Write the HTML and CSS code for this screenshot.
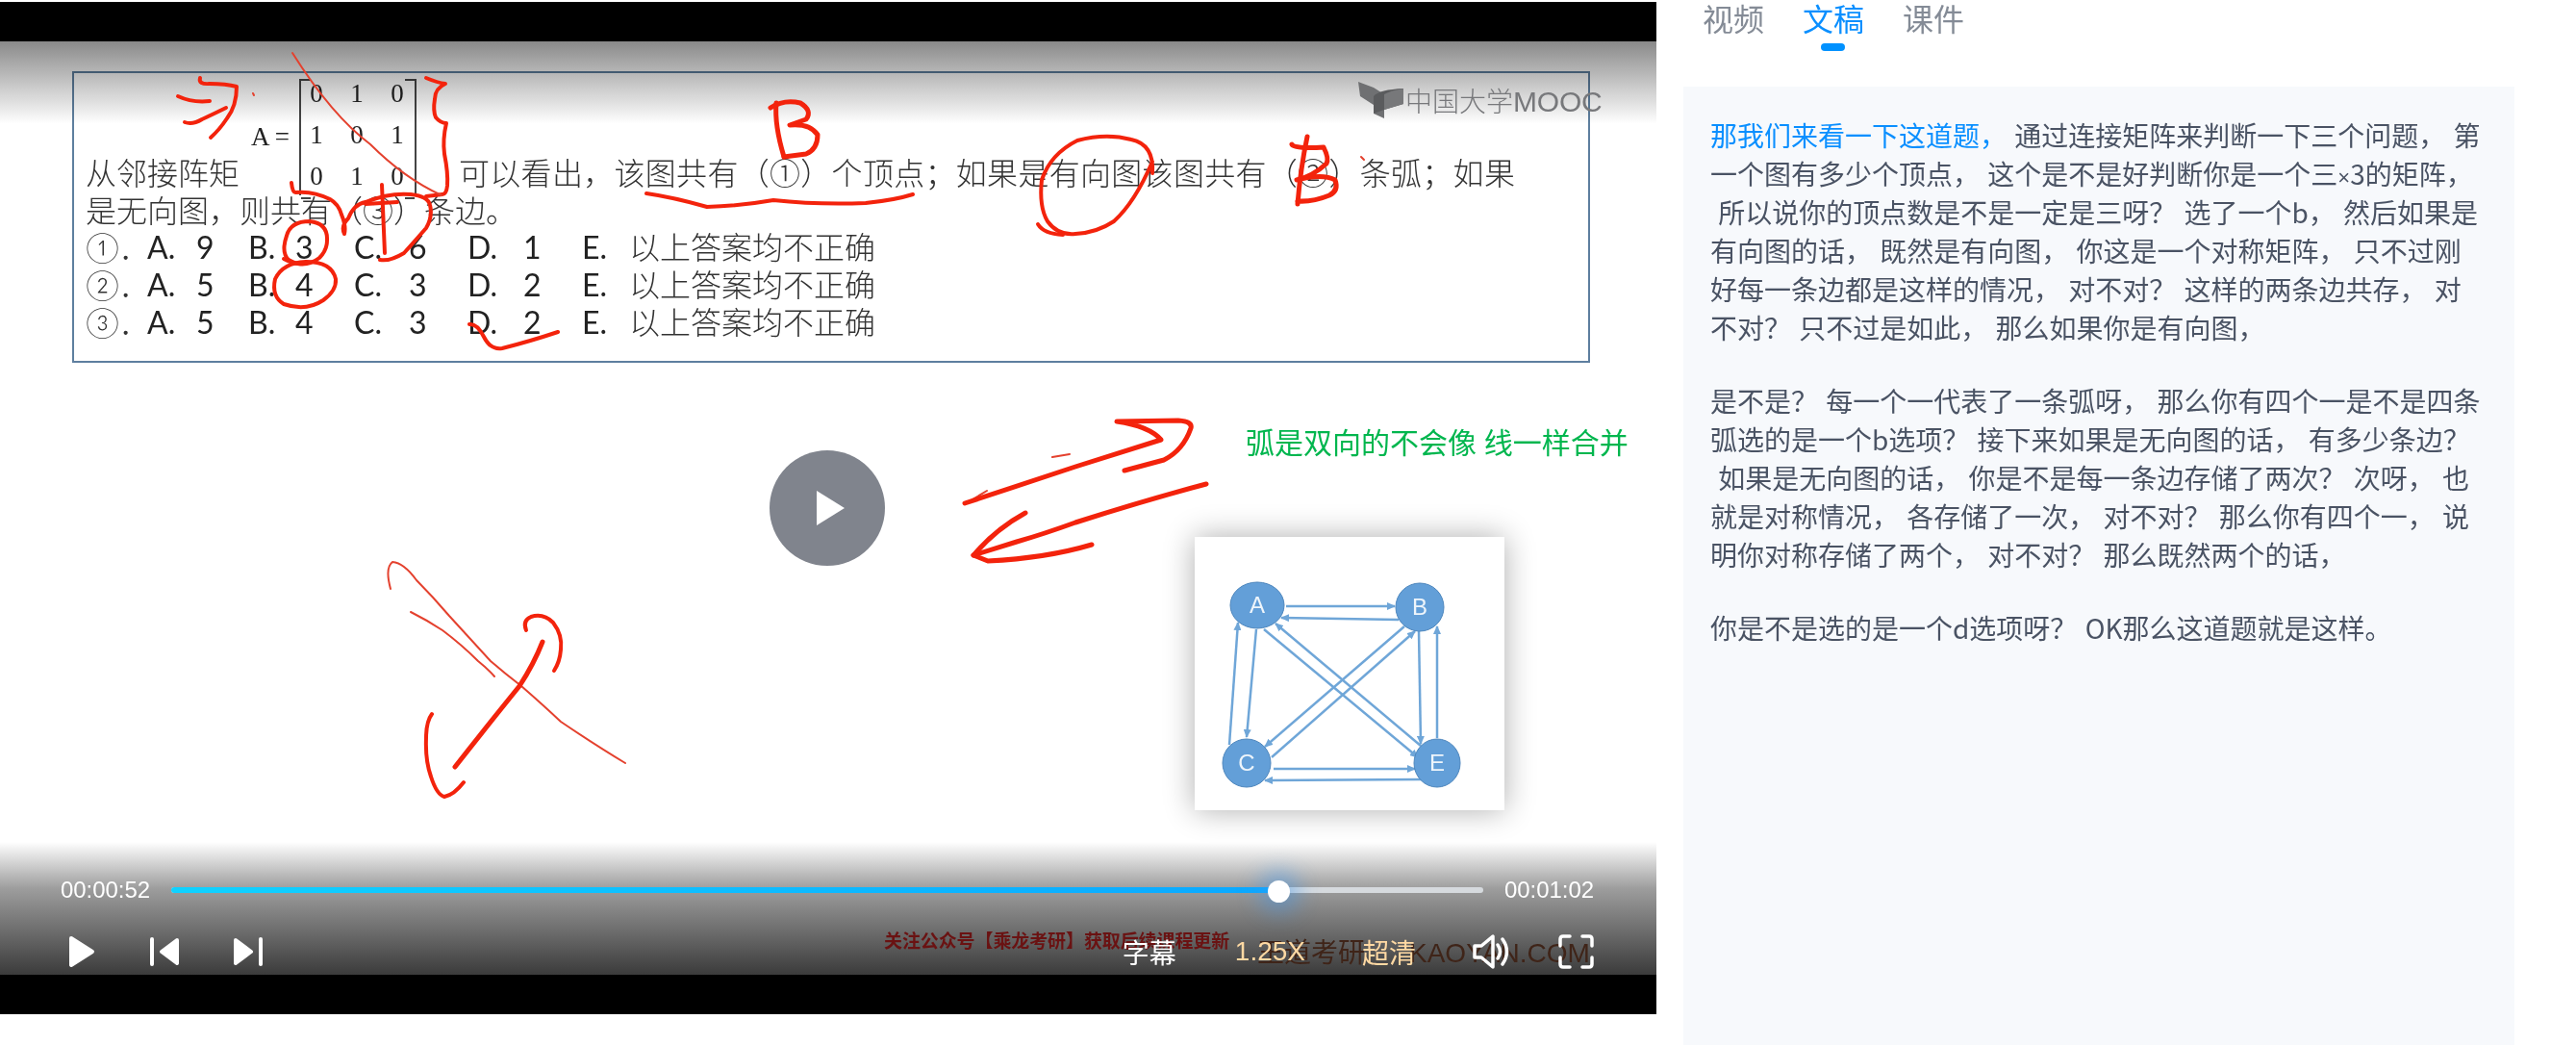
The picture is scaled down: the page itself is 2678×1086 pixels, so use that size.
FILE: index.html
```html
<!DOCTYPE html>
<html lang="zh-CN">
<head>
<meta charset="utf-8">
<title>文稿</title>
<link rel="stylesheet" href="styles.css">
</head>
<body>
<div class="page">
  <section class="player">
    <div class="letterbox"></div>
    <div class="stage">
      <div class="question">
        <p class="q-line q-first"><span>从邻接阵矩</span><span>可以看出，该图共有（①）个顶点；如果是有向图该图共有（②）条弧；如果</span></p>
        <p class="q-line">是无向图，则共有（③）条边。</p>
        <div class="opts">
          <span>①．</span><span>A.</span><span>9</span><span>B.</span><span>3</span><span>C.</span><span>6</span><span>D.</span><span>1</span><span>E.</span><span>以上答案均不正确</span>
          <span>②．</span><span>A.</span><span>5</span><span>B.</span><span>4</span><span>C.</span><span>3</span><span>D.</span><span>2</span><span>E.</span><span>以上答案均不正确</span>
          <span>③．</span><span>A.</span><span>5</span><span>B.</span><span>4</span><span>C.</span><span>3</span><span>D.</span><span>2</span><span>E.</span><span>以上答案均不正确</span>
        </div>
        <div class="matrix-wrap">
          <span class="matrix-name">A =</span>
          <div class="matrix">
            <span>0</span><span>1</span><span>0</span>
            <span>1</span><span>0</span><span>1</span>
            <span>0</span><span>1</span><span>0</span>
          </div>
        </div>
      </div>

      <div class="top-shade"></div>

      <div class="mooc">
        <svg class="mooc-logo" width="47" height="38" viewBox="0 0 47 38">
          <path d="M0 0 L16 6 L27 13 L27 38 L16 33 L16 24 L2 15 Z" fill="#6f7072"/>
          <path d="M16 15 Q22 8 47 7 L47 23 L27 29 L16 33 Z" fill="#5a5b5d"/>
          <path d="M27 13 Q34 9 47 7 L47 23 L27 29 Z" fill="#77787a"/>
        </svg>
        <span class="mooc-text">中国大学<span class="mooc-en">MOOC</span></span>
      </div>

      <p class="note">弧是双向的不会像 线一样合并</p>

      <div class="graph-card">
        <svg width="322" height="284" viewBox="0 0 322 284">
          <defs>
            <marker id="ah" markerWidth="9" markerHeight="8" refX="8" refY="4" orient="auto" markerUnits="userSpaceOnUse">
              <path d="M0 0 L9 4 L0 8 Z" fill="#6fa6d8"/>
            </marker>
          </defs>
          <g class="edges">
            <line x1="95" y1="72" x2="208" y2="72" marker-end="url(#ah)"/>
            <line x1="212" y1="86" x2="90" y2="84" marker-end="url(#ah)"/>
            <line x1="64" y1="96" x2="54" y2="208" marker-end="url(#ah)"/>
            <line x1="36" y1="216" x2="45" y2="89" marker-end="url(#ah)"/>
            <line x1="72" y1="96" x2="232" y2="229" marker-end="url(#ah)"/>
            <line x1="235" y1="217" x2="84" y2="90" marker-end="url(#ah)"/>
            <line x1="218" y1="93" x2="73" y2="218" marker-end="url(#ah)"/>
            <line x1="80" y1="229" x2="229" y2="98" marker-end="url(#ah)"/>
            <line x1="233" y1="98" x2="235" y2="215" marker-end="url(#ah)"/>
            <line x1="252" y1="209" x2="252" y2="93" marker-end="url(#ah)"/>
            <line x1="82" y1="241" x2="229" y2="241" marker-end="url(#ah)"/>
            <line x1="235" y1="252" x2="73" y2="253" marker-end="url(#ah)"/>
          </g>
          <g class="nodes">
            <ellipse cx="65" cy="71" rx="28" ry="24"/>
            <ellipse cx="234" cy="73" rx="25" ry="25"/>
            <ellipse cx="54" cy="235" rx="25" ry="25"/>
            <ellipse cx="252" cy="235" rx="24" ry="25"/>
          </g>
          <g class="labels">
            <text x="65" y="79">A</text>
            <text x="234" y="81">B</text>
            <text x="54" y="243">C</text>
            <text x="252" y="243">E</text>
          </g>
        </svg>
      </div>

      <div class="big-play">
        <svg width="30" height="36" viewBox="0 0 30 36"><path d="M0 0 L29 18 L0 36 Z" fill="#fff"/></svg>
      </div>

      <svg class="ink" width="1722" height="970" viewBox="0 43 1722 970">
        <g class="ink-md">
          <path d="M208 81 Q206 88 218 87 Q235 87 246 90 Q246 110 236 123 Q228 135 219 143"/>
          <path d="M185 100 Q200 107 218 105"/>
          <path d="M192 127 Q200 130 210 124 Q225 117 235 112"/>
          <path d="M443 81 Q455 86 463 87 Q452 92 452 103 Q450 115 453 122 Q458 128 464 128 Q460 145 462 160 Q466 180 465 193 Q464 202 460 202 L443 204"/>
          <path d="M303 190 Q304 200 307 200 Q325 198 343 207 Q352 212 355 223 Q360 235 358 243 Q354 235 362 227 Q368 212 380 210 Q405 200 427 202 Q445 204 447 213 Q450 225 443 237 Q430 252 420 263 Q405 272 395 270"/>
          <path d="M397 192 L400 263"/>
          <path d="M380 212 L413 210"/>
          <path d="M340 250 Q341 232 322 230 Q302 230 298 245 Q292 262 300 270 Q316 280 332 268 Q340 260 340 250"/>
          <path d="M295 269 Q306 275 315 274"/>
          <path d="M349 290 Q345 272 318 272 Q294 273 286 290 Q282 308 295 316 Q318 324 336 312 Q350 302 349 290"/>
          <path d="M488 337 Q496 336 503 350 Q510 364 522 362 Q550 355 580 345"/>
          <path d="M672 201 Q700 205 735 215 Q770 214 804 208 Q850 213 900 211 Q930 208 949 202"/>
          <path d="M1198 180 Q1200 150 1176 145 Q1150 138 1120 146 Q1092 160 1083 187 Q1080 215 1089 230 Q1100 245 1118 243 Q1140 242 1158 230 Q1180 210 1198 168"/>
          <path d="M1079 233 Q1085 243 1105 244"/>
          <path d="M547 655 Q543 645 552 641 Q565 637 575 647 Q585 660 583 675 Q582 688 576 697"/>
          <path d="M449 742 Q443 750 443 767 Q442 790 448 807 Q454 826 462 828 Q472 826 482 813"/>
        </g>
        <g class="ink-thin">
          <path d="M304 55 Q345 120 385 150 Q420 185 459 203"/>
          <path d="M406 612 Q400 590 408 584 Q420 585 433 603 Q450 620 467 640 Q490 665 510 687 Q525 700 542 713 Q565 733 583 750 Q620 775 650 793"/>
          <path d="M427 636 Q445 645 460 655 Q480 670 497 687 Q507 695 514 703"/>
          <path d="M1094 475 L1112 472"/>
          <path d="M1026 510 L1006 522"/>
          <path d="M263 97 L264 99"/>
          <path d="M1415 163 L1418 166"/>
        </g>
        <g class="ink-lg">
          <path d="M807 107 Q805 130 815 163"/>
          <path d="M801 112 Q815 103 832 107 Q845 115 838 124 L821 130 Q842 128 850 140 Q850 155 838 160 L815 163"/>
          <path d="M1359 142 Q1352 175 1349 212"/>
          <path d="M1343 150 Q1345 155 1376 153 Q1382 165 1379 170 Q1365 183 1348 187 Q1375 180 1388 187 Q1392 198 1382 203 Q1365 210 1349 209"/>
          <path d="M564 667 Q555 690 540 713 Q510 750 473 797"/>
          <path d="M1003 523 L1118 485 L1207 457 Q1195 443 1161 438 L1225 437 Q1240 438 1238 445 Q1230 468 1210 478 L1169 489"/>
          <path d="M1254 503 Q1190 520 1118 543 Q1085 555 1057 563 L1012 577 L1027 583 Q1088 580 1135 566"/>
          <path d="M1066 533 Q1035 550 1012 577"/>
        </g>
      </svg>

      <div class="controls">
        <div class="wm wm-red">关注公众号【乘龙考研】获取后续课程更新</div>
        <div class="wm wm-brown">王道考研<span class="wm-en">KAOYAN.COM</span></div>
        <div class="progress-row">
          <span class="time">00:00:52</span>
          <div class="track">
            <div class="played" style="width:84.4%"></div>
            <div class="thumb"></div>
          </div>
          <span class="time">00:01:02</span>
        </div>
        <div class="button-row">
          <div class="btns-left">
            <svg width="28" height="34" viewBox="0 0 28 34"><path d="M3 3 L25 17 L3 31 Z" class="glyph"/></svg>
            <svg width="30" height="30" viewBox="0 0 30 30"><rect x="0" y="0" width="4" height="30" rx="2" fill="#fff"/><path d="M28 3 L12 15 L28 27 Z" class="glyph"/></svg>
            <svg width="30" height="30" viewBox="0 0 30 30"><path d="M2 3 L18 15 L2 27 Z" class="glyph"/><rect x="26" y="0" width="4" height="30" rx="2" fill="#fff"/></svg>
          </div>
          <div class="btns-right">
            <span class="ctl ctl-sub">字幕</span>
            <span class="ctl ctl-speed">1.25X</span>
            <span class="ctl ctl-hd">超清</span>
            <svg width="39" height="36" viewBox="0 0 39 36" class="i-vol">
              <path d="M2 12 H9 L21 2 V34 L9 24 H2 Z" fill="none" stroke="#fff" stroke-width="3.5" stroke-linejoin="round"/>
              <path d="M26 11 Q31 18 26 25" fill="none" stroke="#fff" stroke-width="3.5" stroke-linecap="round"/>
              <path d="M31 5 Q40 18 31 31" fill="none" stroke="#fff" stroke-width="3.5" stroke-linecap="round"/>
            </svg>
            <svg width="37" height="36" viewBox="0 0 37 36" class="i-full">
              <path d="M2 12 V5 Q2 2 5 2 H12 M25 2 H32 Q35 2 35 5 V12 M35 24 V31 Q35 34 32 34 H25 M12 34 H5 Q2 34 2 31 V24" fill="none" stroke="#fff" stroke-width="3.5" stroke-linecap="round"/>
            </svg>
          </div>
        </div>
      </div>
    </div>
    <div class="letterbox"></div>
  </section>

  <aside class="side">
    <nav class="tabs">
      <span class="tab">视频</span>
      <span class="tab tab-on">文稿</span>
      <span class="tab">课件</span>
    </nav>
    <div class="transcript">
<p><span class="current">那我们来看一下这道题，</span> 通过连接矩阵来判断一下三个问题， 第
一个图有多少个顶点， 这个是不是好判断你是一个三<span class="times">×</span>3的矩阵，
 所以说你的顶点数是不是一定是三呀？ 选了一个b， 然后如果是
有向图的话， 既然是有向图， 你这是一个对称矩阵， 只不过刚
好每一条边都是这样的情况， 对不对？ 这样的两条边共存， 对
不对？ 只不过是如此， 那么如果你是有向图，</p>
<p>是不是？ 每一个一代表了一条弧呀， 那么你有四个一是不是四条
弧选的是一个b选项？ 接下来如果是无向图的话， 有多少条边？
 如果是无向图的话， 你是不是每一条边存储了两次？ 次呀， 也
就是对称情况， 各存储了一次， 对不对？ 那么你有四个一， 说
明你对称存储了两个， 对不对？ 那么既然两个的话，</p>
<p>你是不是选的是一个d选项呀？ OK那么这道题就是这样。</p>
    </div>
  </aside>
</div>
</body>
</html>
```

FILE: styles.css
```css
* { box-sizing: border-box; }
html, body { margin: 0; padding: 0; background: #fff; }
body { overflow: hidden; height: 1086px; font-family: "Noto Sans CJK SC", "Liberation Sans", sans-serif; }

.page { display: flex; gap: 28px; height: 1086px; overflow: hidden; }

/* player */
.player { width: 1722px; height: 1052px; margin-top: 2px; display: flex; flex-direction: column; flex: none; }
.letterbox { height: 41px; background: #000; flex: none; }
.stage { position: relative; flex: 1; background: #fff; overflow: hidden; }

/* slide question box */
.question {
  position: absolute; left: 75px; top: 31px; width: 1578px; height: 303px;
  border: 2px solid #5e7f9f; padding: 83px 0 0 12px;
  font-family: "Noto Sans CJK SC", sans-serif; font-size: 32px; font-weight: 300; line-height: 39px; color: #333;
}
.q-line { margin: 0; white-space: nowrap; }
.q-first span + span { margin-left: 228px; letter-spacing: .3px; }
.opts {
  display: grid; grid-template-columns: 64px 51px 54px 49px 61px 57px 61px 58px 61px 49px auto;
  grid-auto-rows: 39px; font-family: Lato, "Noto Sans CJK SC", sans-serif; font-weight: 400; color: #222;
}
.opts span:nth-child(11n), .opts span:nth-child(11n+1) { font-weight: 300; color: #333; }
.matrix-wrap { position: absolute; left: 184px; top: 6px; display: flex; align-items: center; font-family: "Liberation Serif", serif; font-size: 27px; font-weight: 400; color: #222; }
.matrix-name { margin-right: 6px; width: 44px; white-space: nowrap; }
.matrix {
  position: relative; width: 122px; height: 121px; display: grid;
  grid-template-columns: repeat(3, 42px); grid-auto-rows: 43px; justify-items: center; align-items: center;
  line-height: 1;
  border-left: 2px solid #444; border-right: 2px solid #444;
}
.matrix span { margin: -12px 0 0 -10px; }
.matrix::before, .matrix::after { content: ""; position: absolute; left: 0; right: 0; height: 121px; top: 0; }
.matrix::before { border-top: 2px solid #444; border-bottom: 2px solid #444; clip-path: polygon(0 0, 10px 0, 10px 100%, 0 100%); }
.matrix::after { border-top: 2px solid #444; border-bottom: 2px solid #444; clip-path: polygon(calc(100% - 10px) 0, 100% 0, 100% 100%, calc(100% - 10px) 100%); }

.top-shade { position: absolute; left: 0; right: 0; top: 0; height: 86px; background: linear-gradient(#8a8a8a, rgba(255,255,255,0)); mix-blend-mode: multiply; }

.mooc { position: absolute; left: 1412px; top: 42px; display: flex; align-items: center; gap: 2px; }
.mooc-text { font-size: 28px; line-height: 36px; font-weight: 300; color: #77787b; white-space: nowrap; }
.mooc-en { font-family: "Liberation Sans", sans-serif; font-size: 30px; line-height: 0; letter-spacing: -.2px; }

.note { position: absolute; left: 1295px; top: 395px; margin: 0; font-size: 30px; line-height: 40px; color: #00b64e; white-space: nowrap; word-spacing: 1px; }

.graph-card { position: absolute; left: 1242px; top: 515px; width: 322px; height: 284px; background: #fff; box-shadow: 0 0 30px rgba(0,0,0,.32); }
.graph-card svg { display: block; }
.edges line { stroke: #6fa6d8; stroke-width: 2.5; fill: none; }
.nodes ellipse { fill: #639fd8; stroke: #4d86bd; stroke-width: 1; }
.labels text { fill: #eef5fb; font-family: "Liberation Sans", sans-serif; font-size: 24px; text-anchor: middle; }

.big-play { position: absolute; left: 800px; top: 425px; width: 120px; height: 120px; border-radius: 50%; background: #80848d; display: flex; align-items: center; justify-content: center; padding-left: 8px; }
.big-play svg { display: block; }

.ink { position: absolute; left: 0; top: 0; pointer-events: none; }
.ink path { fill: none; stroke: #f3230c; stroke-linecap: round; stroke-linejoin: round; }
.ink-thin path { stroke-width: 2; stroke: #e4412e; }
.ink-md path { stroke-width: 4; }
.ink-lg path { stroke-width: 5; }

/* controls */
.controls { position: absolute; left: 0; right: 0; bottom: 0; height: 138px; padding: 34px 65px 4px 63px; background: linear-gradient(rgba(60,60,60,0), rgba(60,60,60,.5) 35%, #3b3b3b); display: flex; flex-direction: column; }
.wm { position: absolute; white-space: nowrap; }
.wm-red { left: 919px; top: 88px; font-size: 19px; letter-spacing: -.1px; line-height: 28px; font-weight: 700; color: #6a1212; }
.wm-brown { left: 1307px; top: 92px; font-size: 28px; line-height: 42px; color: #3f2418; }
.wm-en { margin-left: 46px; font-family: "Liberation Sans", sans-serif; }

.progress-row { display: flex; align-items: center; gap: 22px; height: 32px; position: relative; }
.time { font-family: "Liberation Sans", sans-serif; font-size: 24px; letter-spacing: -.05px; color: #fff; }
.track { flex: 1; height: 6px; border-radius: 3px; background: #d6dade; position: relative; }
.played { height: 6px; border-radius: 3px 0 0 3px; background: linear-gradient(90deg, #0fd2ff, #0aa8ff); }
.thumb { position: absolute; left: 84.4%; top: 50%; width: 23px; height: 23px; margin: -10px 0 0 -11px; border-radius: 50%; background: #fff; box-shadow: 0 0 22px 10px rgba(60,150,240,.45); }

.button-row { display: flex; align-items: center; justify-content: space-between; height: 40px; margin-top: 28px; position: relative; }
.btns-left { display: flex; align-items: center; gap: 57px; margin-left: 8px; }
.glyph { fill: #fff; stroke: #fff; stroke-width: 4; stroke-linejoin: round; }
.btns-right { display: flex; align-items: center; }
.ctl { font-size: 28px; line-height: 40px; white-space: nowrap; }
.ctl-sub { color: #fff; }
.ctl-speed { color: #ffd9a3; margin-left: 61px; font-family: "Liberation Sans", sans-serif; }
.ctl-hd { color: #ffd9a3; margin-left: 59px; }
.i-vol { margin-left: 59px; }
.i-full { margin-left: 50px; }

/* side */
.side { width: 864px; flex: none; display: flex; flex-direction: column; }
.tabs { display: flex; gap: 40px; height: 90px; padding-left: 20px; align-items: flex-start; }
.tab { position: relative; font-size: 32px; line-height: 36px; color: #848b96; }
.tab-on { color: #0a8fff; }
.tab-on::after { content: ""; position: absolute; left: 19px; top: 45px; width: 25px; height: 8px; border-radius: 4px; background: #0091ff; }
.transcript { flex: 1; background: #f7f9fc; padding: 30px 0 0 28px; font-size: 28px; line-height: 40px; color: #4a5364; word-spacing: 2px; }
.transcript p { margin: 0 0 36px; white-space: pre; }
.times { font-family: "Liberation Sans", sans-serif; font-size: 22px; line-height: 0; }
.current { color: #0a8fff; }
```
